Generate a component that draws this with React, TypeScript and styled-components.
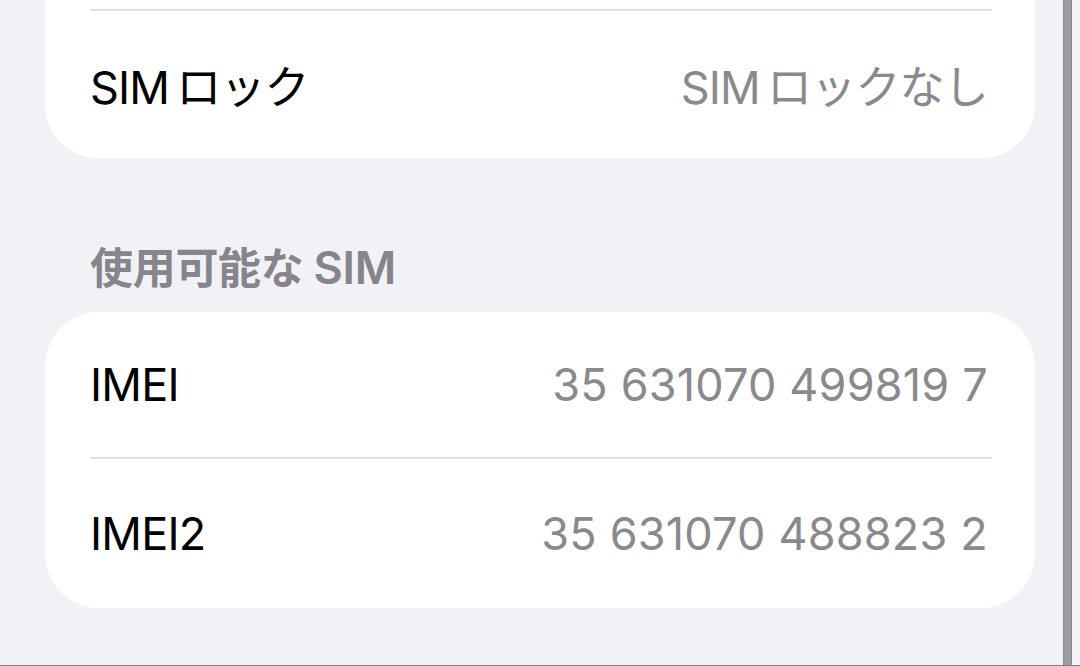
import React from 'react';
import styled, { createGlobalStyle } from 'styled-components';

const GlobalStyle = createGlobalStyle`
  html, body {
    margin: 0;
    padding: 0;
    background: #f2f1f6;
  }
  body {
    font-family: "Inter", "Noto Sans CJK JP", sans-serif;
    -webkit-font-smoothing: antialiased;
  }
`;

const Screen = styled.div`
  display: flex;
  width: 1080px;
  height: 666px;
  overflow: hidden;
  box-sizing: border-box;
  border-bottom: 1px solid #7d7c82;
  background: #f2f1f6;
`;

const Content = styled.main`
  flex: 0 0 1063px;
  display: flex;
  flex-direction: column;
  padding: 0 28px 0 45px;
  box-sizing: border-box;
`;

const ScrollBar = styled.div`
  flex: 0 0 7px;
  background: #9e9da3;
  border-left: 1px solid #8a898f;
  border-right: 1px solid #8a898f;
`;

const Edge = styled.div`
  flex: 1;
  background: #f4f3f8;
`;

const Card = styled.section<{ $clipped?: boolean }>`
  background: #ffffff;
  border-radius: ${p => (p.$clipped ? '0 0 54px 54px' : '54px')};
  display: flex;
  flex-direction: column;
  padding-top: ${p => (p.$clipped ? '9px' : '0')};
`;

const Separator = styled.div`
  height: 2px;
  background: #e2e2e6;
  margin: 0 43px 0 45px;
`;

const Row = styled.div<{ $h: number }>`
  height: ${p => p.$h}px;
  display: flex;
  align-items: center;
  justify-content: space-between;
  padding: 0 47px 0 45px;
  font-size: 45px;
`;

const Label = styled.span`
  color: #000000;
  letter-spacing: -0.8px;
`;

const Value = styled.span<{ $numeric?: boolean }>`
  color: #8a898e;
  letter-spacing: ${p => (p.$numeric ? '0.2px' : '-0.8px')};
`;

// iOS puts a little air between Latin and Japanese runs
const Latin = styled.span`
  margin-right: 7px;
`;

const SectionHeader = styled.h2`
  margin: 87px 0 0 45px;
  height: 67px;
  font-size: 43px;
  font-weight: 600;
  color: #86858b;
  line-height: 46px;
  letter-spacing: -0.3px;
`;

const HeaderLatin = styled.span`
  margin-left: 10px;
  font-size: 45px;
`;

type Item = { label: string; value: string; h: number };

const simItems: Item[] = [
  { label: 'IMEI', value: '35 631070 499819 7', h: 145 },
  { label: 'IMEI2', value: '35 631070 488823 2', h: 149 },
];

export default function App() {
  return (
    <>
      <GlobalStyle />
      <Screen>
        <Content>
          <Card $clipped>
            <Separator />
            <Row $h={147}>
              <Label><Latin>SIM</Latin>ロック</Label>
              <Value><Latin>SIM</Latin>ロックなし</Value>
            </Row>
          </Card>

          <SectionHeader>使用可能な<HeaderLatin>SIM</HeaderLatin></SectionHeader>

          <Card>
            {simItems.map((item, idx) => (
              <React.Fragment key={item.label}>
                {idx > 0 && <Separator />}
                <Row $h={item.h}>
                  <Label>{item.label}</Label>
                  <Value $numeric>{item.value}</Value>
                </Row>
              </React.Fragment>
            ))}
          </Card>
        </Content>
        <ScrollBar />
        <Edge />
      </Screen>
    </>
  );
}
